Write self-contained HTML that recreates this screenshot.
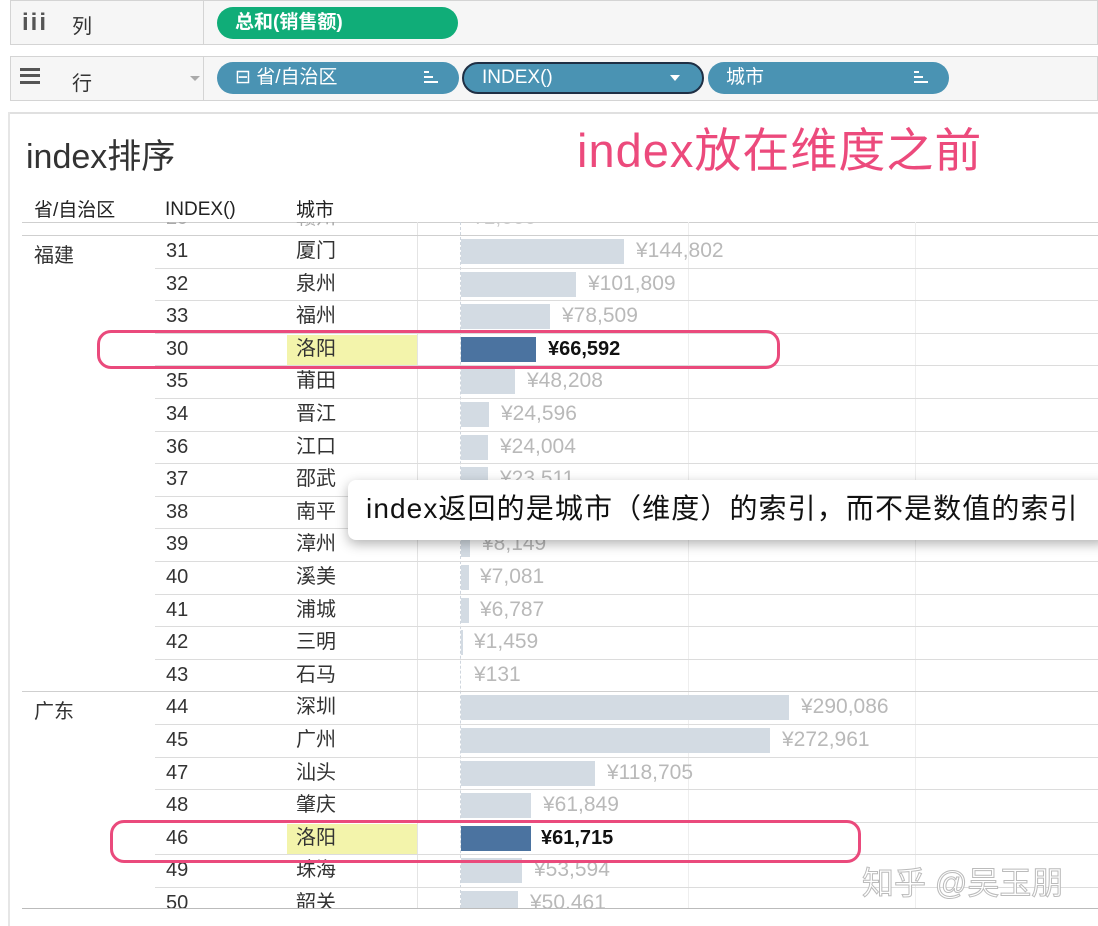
<!DOCTYPE html>
<html><head><meta charset="utf-8"><style>
*{margin:0;padding:0;box-sizing:border-box}
body{width:1098px;height:926px;background:#fff;position:relative;overflow:hidden;font-family:"Liberation Sans","Noto Sans CJK SC",sans-serif;color:#333}
.a{position:absolute}
.shelf{position:absolute;left:10px;right:0;background:#f6f6f6;border:1px solid #d4d4d4}
.pill{position:absolute;height:32px;border-radius:16px;color:#fff;font-size:19px;line-height:32px;padding-left:18px;font-weight:bold}
.blue{background:#4a93b3}
.sort{position:absolute;width:14px;height:14px}
.sort i{position:absolute;left:0;height:2px;background:#fff}
.clip{position:absolute;left:0;top:222px;width:1098px;height:686px;overflow:hidden}
.row{position:absolute;left:0;width:1098px;height:33px;font-size:20px;line-height:32px}
.row .ln{position:absolute;left:155px;right:0;top:0;border-top:1.5px solid #dcdcdc}
.row .n{position:absolute;left:166px}
.row .c{position:absolute;left:296px}
.row .b{position:absolute;left:461px;top:4px;height:25px;background:#d3dbe3}
.row .v{position:absolute;color:#b9b9b9;font-size:21px}
.hl .b{background:#4b73a0}
.hl .v{color:#111;font-weight:bold;font-size:20px}
.hl .y{position:absolute;left:287px;top:2px;width:130px;height:30px;background:#f3f4ab}
</style></head><body>
<div class="shelf" style="top:0;height:45px;left:10px"></div>
<div class="a" style="left:203px;top:0;height:45px;border-left:1px solid #d4d4d4"></div>
<div class="a" style="left:22px;top:9px;font-size:24px;color:#555;font-weight:bold;letter-spacing:2px">iii</div>
<div class="a" style="left:72px;top:10px;font-size:20px;color:#333">列</div>
<div class="pill" style="left:217px;top:7px;width:241px;background:#10ad78">总和(销售额)</div>

<div class="shelf" style="top:56px;height:45px"></div>
<div class="a" style="left:203px;top:56px;height:45px;border-left:1px solid #d4d4d4"></div>
<div class="a" style="left:20px;top:68px;width:20px;height:16px;border-top:3px solid #555;border-bottom:3px solid #555"></div>
<div class="a" style="left:20px;top:74px;width:20px;border-top:3px solid #555"></div>
<div class="a" style="left:72px;top:67px;font-size:20px;color:#333">行</div>
<div class="a" style="left:190px;top:76px;border:5px solid transparent;border-top:5px solid #aaa"></div>
<div class="pill blue" style="left:217px;top:62px;width:242px;font-weight:normal">⊟ 省/自治区</div>
<div class="sort" style="left:424px;top:71px"><i style="top:0;width:5px"></i><i style="top:5px;width:9px"></i><i style="top:10px;width:14px"></i></div>
<div class="pill blue" style="left:462px;top:62px;width:242px;border:2px solid #1f2f44;line-height:28px;font-weight:normal">INDEX()</div>
<div class="a" style="left:670px;top:75px;border:5px solid transparent;border-top:6px solid #fff"></div>
<div class="pill blue" style="left:708px;top:62px;width:241px;font-weight:normal">城市</div>
<div class="sort" style="left:914px;top:71px"><i style="top:0;width:5px"></i><i style="top:5px;width:9px"></i><i style="top:10px;width:14px"></i></div>

<div class="a" style="left:8px;top:112px;width:1090px;height:2px;background:#e0e0e0"></div>
<div class="a" style="left:8px;top:112px;height:814px;border-left:2px solid #e6e6e6"></div>
<div class="a" style="left:26px;top:129px;font-size:34px;color:#333">index排序</div>
<div class="a" style="left:577px;top:112px;font-size:47px;color:#ec4a7c;letter-spacing:1px">index放在维度之前</div>
<div class="a" style="left:34px;top:195px;font-size:19px;color:#222">省/自治区</div>
<div class="a" style="left:165px;top:199px;font-size:19px;color:#222">INDEX()</div>
<div class="a" style="left:296px;top:195px;font-size:19px;color:#222">城市</div>
<div class="a" style="left:22px;top:222px;width:1076px;border-top:1.5px solid #cfcfcf"></div>

<div class="clip">
<div class="a" style="left:417px;top:0;height:686px;border-left:1px solid #e4e4e4"></div>
<div class="a" style="left:460px;top:0;height:686px;border-left:1px dashed #cfd6de"></div>
<div class="a" style="left:688px;top:0;height:686px;border-left:1px solid #eeeeee"></div>
<div class="a" style="left:915px;top:0;height:686px;border-left:1px solid #eeeeee"></div>
<div class="row" style="top:-20px;color:#aaa"><span class="n">29</span><span class="c">赣州</span><span class="v" style="left:472px;color:#ccc">¥1,000</span></div>
<div class="a" style="left:22px;top:13px;width:1076px;border-top:1.5px solid #cfcfcf"></div>
<div class="a" style="left:34px;top:17px;font-size:20px">福建</div>
<div class="a" style="left:22px;top:469px;width:1076px;border-top:1.5px solid #cfcfcf"></div>
<div class="a" style="left:34px;top:473px;font-size:20px">广东</div>

<div class="row" style="top:13px"><span class="n">31</span><span class="c">厦门</span><div class="b" style="width:163px"></div><span class="v" style="left:636px">¥144,802</span></div>
<div class="row" style="top:45.6px"><div class="ln"></div><span class="n">32</span><span class="c">泉州</span><div class="b" style="width:115px"></div><span class="v" style="left:588px">¥101,809</span></div>
<div class="row" style="top:78.2px"><div class="ln"></div><span class="n">33</span><span class="c">福州</span><div class="b" style="width:89px"></div><span class="v" style="left:562px">¥78,509</span></div>
<div class="row hl" style="top:110.8px"><div class="ln"></div><div class="y"></div><span class="n">30</span><span class="c">洛阳</span><div class="b" style="width:75px"></div><span class="v" style="left:548px">¥66,592</span></div>
<div class="row" style="top:143.4px"><div class="ln"></div><span class="n">35</span><span class="c">莆田</span><div class="b" style="width:54px"></div><span class="v" style="left:527px">¥48,208</span></div>
<div class="row" style="top:176px"><div class="ln"></div><span class="n">34</span><span class="c">晋江</span><div class="b" style="width:28px"></div><span class="v" style="left:501px">¥24,596</span></div>
<div class="row" style="top:208.6px"><div class="ln"></div><span class="n">36</span><span class="c">江口</span><div class="b" style="width:27px"></div><span class="v" style="left:500px">¥24,004</span></div>
<div class="row" style="top:241.2px"><div class="ln"></div><span class="n">37</span><span class="c">邵武</span><div class="b" style="width:27px"></div><span class="v" style="left:500px">¥23,511</span></div>
<div class="row" style="top:273.8px"><div class="ln"></div><span class="n">38</span><span class="c">南平</span></div>
<div class="row" style="top:306.4px"><div class="ln"></div><span class="n">39</span><span class="c">漳州</span><div class="b" style="width:9px"></div><span class="v" style="left:482px">¥8,149</span></div>
<div class="row" style="top:339px"><div class="ln"></div><span class="n">40</span><span class="c">溪美</span><div class="b" style="width:8px"></div><span class="v" style="left:480px">¥7,081</span></div>
<div class="row" style="top:371.6px"><div class="ln"></div><span class="n">41</span><span class="c">浦城</span><div class="b" style="width:8px"></div><span class="v" style="left:480px">¥6,787</span></div>
<div class="row" style="top:404.2px"><div class="ln"></div><span class="n">42</span><span class="c">三明</span><div class="b" style="width:2px"></div><span class="v" style="left:474px">¥1,459</span></div>
<div class="row" style="top:436.8px"><div class="ln"></div><span class="n">43</span><span class="c">石马</span><span class="v" style="left:474px">¥131</span></div>
<div class="row" style="top:469.4px"><span class="n">44</span><span class="c">深圳</span><div class="b" style="width:328px"></div><span class="v" style="left:801px">¥290,086</span></div>
<div class="row" style="top:502px"><div class="ln"></div><span class="n">45</span><span class="c">广州</span><div class="b" style="width:309px"></div><span class="v" style="left:782px">¥272,961</span></div>
<div class="row" style="top:534.6px"><div class="ln"></div><span class="n">47</span><span class="c">汕头</span><div class="b" style="width:134px"></div><span class="v" style="left:607px">¥118,705</span></div>
<div class="row" style="top:567.2px"><div class="ln"></div><span class="n">48</span><span class="c">肇庆</span><div class="b" style="width:70px"></div><span class="v" style="left:543px">¥61,849</span></div>
<div class="row hl" style="top:599.8px"><div class="ln"></div><div class="y"></div><span class="n">46</span><span class="c">洛阳</span><div class="b" style="width:70px"></div><span class="v" style="left:541px">¥61,715</span></div>
<div class="row" style="top:632.4px"><div class="ln"></div><span class="n">49</span><span class="c">珠海</span><div class="b" style="width:61px"></div><span class="v" style="left:534px">¥53,594</span></div>
<div class="row" style="top:665px"><div class="ln"></div><span class="n">50</span><span class="c">韶关</span><div class="b" style="width:57px"></div><span class="v" style="left:530px">¥50,461</span></div>
</div>
<div class="a" style="left:22px;top:908px;width:1076px;border-top:1.5px solid #bbb"></div>

<div class="a" style="left:97px;top:330px;width:683px;height:39px;border:3px solid #ea4a7c;border-radius:14px"></div>
<div class="a" style="left:110px;top:820px;width:751px;height:43px;border:3px solid #ea4a7c;border-radius:14px"></div>

<div class="a" style="left:348px;top:480px;width:760px;height:60px;background:#fff;border-radius:8px;box-shadow:0 4px 12px rgba(0,0,0,0.3);font-size:28px;color:#111;line-height:58px;padding-left:18px;white-space:nowrap;letter-spacing:1.1px">index返回的是城市（维度）的索引，而不是数值的索引</div>

<div class="a" style="left:862px;top:858px;font-size:32px;color:#fff;-webkit-text-stroke:1px #bbb;white-space:nowrap">知乎 @吴玉朋</div>
</body></html>
